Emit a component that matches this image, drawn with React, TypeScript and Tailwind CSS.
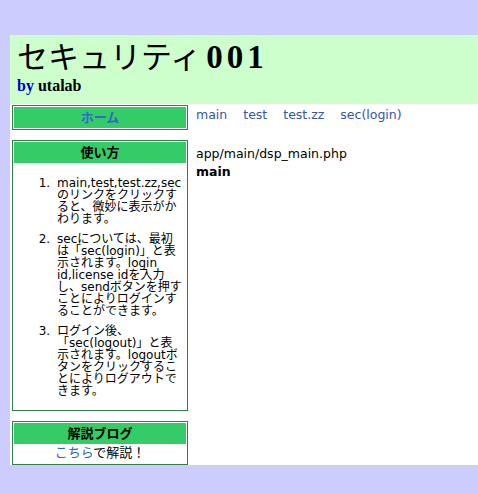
import React from 'react'

const sans = { fontFamily: 'Tahoma, "DejaVu Sans", "Noto Sans CJK JP", sans-serif' }

function SideBox({ title, children, titleClass }: { title: React.ReactNode; children?: React.ReactNode; titleClass?: string }) {
  return (
    <div className="border border-[#2f7f4f] p-px bg-white">
      <div className={`bg-[#33cc66] h-[21px] flex items-center justify-center text-[13px] font-bold ${titleClass ?? 'text-black'}`}>
        {title}
      </div>
      {children}
    </div>
  )
}

export default function App() {
  return (
    <div className="min-h-[494px] bg-[#ccccff] pt-[35px] pl-[10px] pb-[19px]" style={sans}>
      <div className="bg-white">
        {/* Header */}
        <div className="bg-[#ccffcc] h-[69px] pl-[7px] pt-[3px]">
          <h1 className="text-[31px] leading-[38px] text-black" style={{ fontFamily: '"Liberation Serif", "Noto Sans CJK JP", serif' }}>
            セキュリティ<span className="font-bold ml-[5px] text-[33px] tracking-[4px]">001</span>
          </h1>
          <p className="text-[16px] leading-[18px] font-bold" style={{ fontFamily: '"Liberation Serif", serif' }}>
            <span className="text-[#0000cc]">by</span> utalab
          </p>
        </div>

        <div className="flex">
          {/* Sidebar */}
          <div className="w-[176px] ml-[2px] mt-px flex flex-col gap-[10px]">
            <SideBox title="ホーム" titleClass="text-[#3366cc]" />
            <SideBox title="使い方">
              <ol className="list-decimal pl-[40px] pr-[2px] pt-[14px] h-[246px] text-[12px] leading-[12px] text-black flex flex-col gap-[8px]">
                <li className="pl-[3px]">main,test,test.zz,secのリンクをクリックすると、微妙に表示がかわります。</li>
                <li className="pl-[3px]">secについては、最初は「sec(login)」と表示されます。login id,license idを入力し、sendボタンを押すことによりログインすることができます。</li>
                <li className="pl-[3px]">ログイン後、「sec(logout)」と表示されます。logoutボタンをクリックすることによりログアウトできます。</li>
              </ol>
            </SideBox>
            <SideBox title="解説ブログ">
              <p className="text-center text-[13px] leading-[18px] pb-px">
                <span className="text-[#3366bb]">こちら</span>で解説！
              </p>
            </SideBox>
          </div>

          {/* Main */}
          <div className="flex-1 pl-[8px] pt-[3px] text-[12.5px]">
            <nav className="flex gap-[16px] text-[#3355aa] leading-[16px]">
              <a>main</a>
              <a>test</a>
              <a>test.zz</a>
              <a>sec(login)</a>
            </nav>
            <p className="mt-[22px] leading-[18px] text-black">app/main/dsp_main.php</p>
            <p className="leading-[18px] font-bold text-black">main</p>
          </div>
        </div>
      </div>
    </div>
  )
}
